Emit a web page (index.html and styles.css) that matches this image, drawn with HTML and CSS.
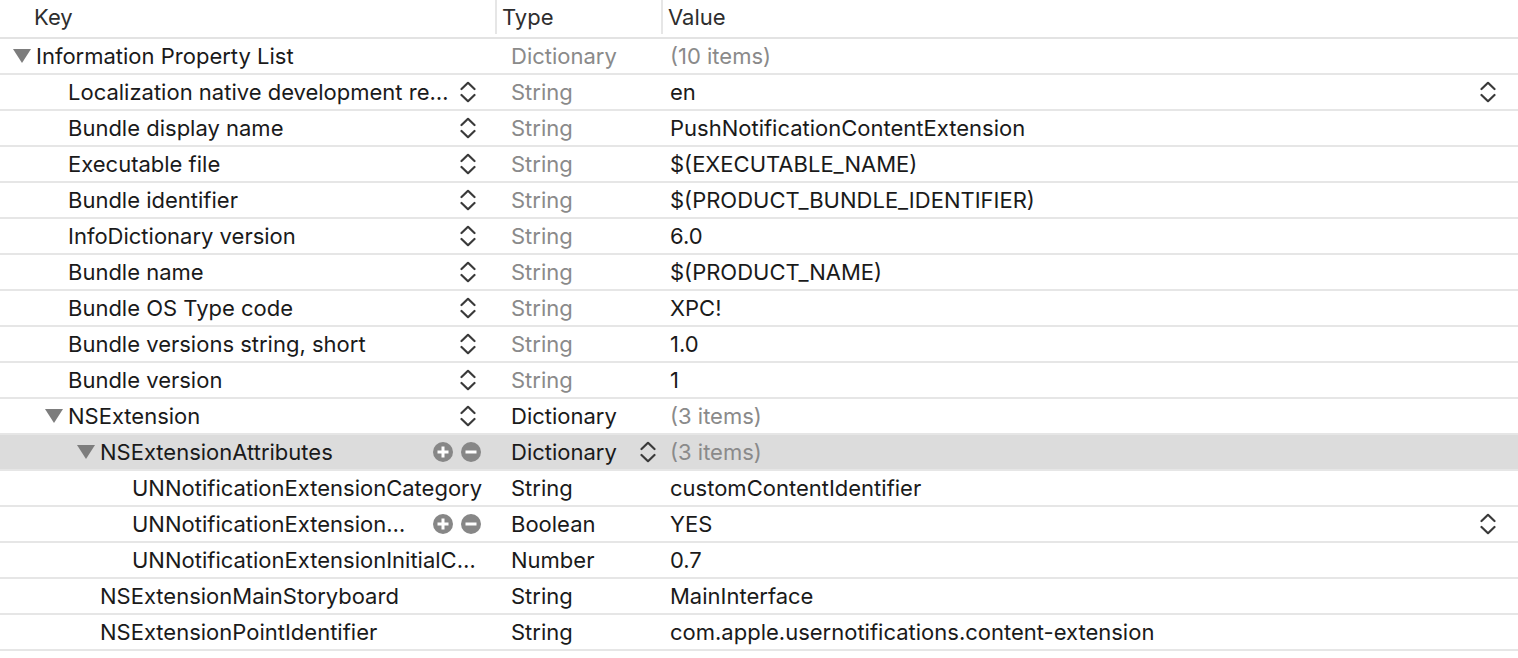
FILE: index.html
```html
<!DOCTYPE html>
<html>
<head>
<meta charset="utf-8">
<link rel="stylesheet" href="styles.css">
</head>
<body>
<svg width="0" height="0" class="defs">
  <defs>
    <symbol id="stepper" viewBox="0 0 16 22">
      <polyline points="1.5,8 8,1.8 14.5,8" fill="none" stroke="#3a3a3a" stroke-width="2.2" stroke-linecap="round" stroke-linejoin="round"/>
      <polyline points="1.5,14 8,20.2 14.5,14" fill="none" stroke="#3a3a3a" stroke-width="2.2" stroke-linecap="round" stroke-linejoin="round"/>
    </symbol>
    <symbol id="plus" viewBox="0 0 20 20">
      <circle cx="10" cy="10" r="10" fill="#878787"/>
      <rect x="4.5" y="8.5" width="11" height="3" fill="#fff"/>
      <rect x="8.5" y="4.5" width="3" height="11" fill="#fff"/>
    </symbol>
    <symbol id="minus" viewBox="0 0 20 20">
      <circle cx="10" cy="10" r="10" fill="#878787"/>
      <rect x="4.5" y="8.5" width="11" height="3" fill="#fff"/>
    </symbol>
    <symbol id="tri" viewBox="0 0 18 14">
      <polygon points="0,0 18,0 9,14" fill="#7d7d7d"/>
    </symbol>
  </defs>
</svg>
<div class="plist">
  <div class="header">
    <div class="hcell hkey">Key</div>
    <div class="hcell htype">Type</div>
    <div class="hcell hvalue">Value</div>
  </div>

  <div class="row">
    <div class="cell key lvl0"><svg class="tri"><use href="#tri"/></svg><span class="k">Information Property List</span></div>
    <div class="cell type dim">Dictionary</div>
    <div class="cell value dim">(10 items)</div>
  </div>

  <div class="row">
    <div class="cell key lvl1"><span class="notri"></span><span class="k">Localization native development re…</span><svg class="stepper kstep"><use href="#stepper"/></svg></div>
    <div class="cell type dim">String</div>
    <div class="cell value"><span class="v">en</span><svg class="stepper vstep"><use href="#stepper"/></svg></div>
  </div>

  <div class="row">
    <div class="cell key lvl1"><span class="notri"></span><span class="k">Bundle display name</span><svg class="stepper kstep"><use href="#stepper"/></svg></div>
    <div class="cell type dim">String</div>
    <div class="cell value">PushNotificationContentExtension</div>
  </div>

  <div class="row">
    <div class="cell key lvl1"><span class="notri"></span><span class="k">Executable file</span><svg class="stepper kstep"><use href="#stepper"/></svg></div>
    <div class="cell type dim">String</div>
    <div class="cell value">$(EXECUTABLE_NAME)</div>
  </div>

  <div class="row">
    <div class="cell key lvl1"><span class="notri"></span><span class="k">Bundle identifier</span><svg class="stepper kstep"><use href="#stepper"/></svg></div>
    <div class="cell type dim">String</div>
    <div class="cell value">$(PRODUCT_BUNDLE_IDENTIFIER)</div>
  </div>

  <div class="row">
    <div class="cell key lvl1"><span class="notri"></span><span class="k">InfoDictionary version</span><svg class="stepper kstep"><use href="#stepper"/></svg></div>
    <div class="cell type dim">String</div>
    <div class="cell value">6.0</div>
  </div>

  <div class="row">
    <div class="cell key lvl1"><span class="notri"></span><span class="k">Bundle name</span><svg class="stepper kstep"><use href="#stepper"/></svg></div>
    <div class="cell type dim">String</div>
    <div class="cell value">$(PRODUCT_NAME)</div>
  </div>

  <div class="row">
    <div class="cell key lvl1"><span class="notri"></span><span class="k">Bundle OS Type code</span><svg class="stepper kstep"><use href="#stepper"/></svg></div>
    <div class="cell type dim">String</div>
    <div class="cell value">XPC!</div>
  </div>

  <div class="row">
    <div class="cell key lvl1"><span class="notri"></span><span class="k">Bundle versions string, short</span><svg class="stepper kstep"><use href="#stepper"/></svg></div>
    <div class="cell type dim">String</div>
    <div class="cell value">1.0</div>
  </div>

  <div class="row">
    <div class="cell key lvl1"><span class="notri"></span><span class="k">Bundle version</span><svg class="stepper kstep"><use href="#stepper"/></svg></div>
    <div class="cell type dim">String</div>
    <div class="cell value">1</div>
  </div>

  <div class="row">
    <div class="cell key lvl1"><svg class="tri"><use href="#tri"/></svg><span class="k">NSExtension</span><svg class="stepper kstep"><use href="#stepper"/></svg></div>
    <div class="cell type">Dictionary</div>
    <div class="cell value dim">(3 items)</div>
  </div>

  <div class="row selected">
    <div class="cell key lvl2"><svg class="tri"><use href="#tri"/></svg><span class="k">NSExtensionAttributes</span><span class="pm"><svg class="btn"><use href="#plus"/></svg><svg class="btn"><use href="#minus"/></svg></span></div>
    <div class="cell type"><span class="v">Dictionary</span><svg class="stepper tstep"><use href="#stepper"/></svg></div>
    <div class="cell value dim">(3 items)</div>
  </div>

  <div class="row">
    <div class="cell key lvl3"><span class="notri"></span><span class="k">UNNotificationExtensionCategory</span></div>
    <div class="cell type">String</div>
    <div class="cell value">customContentIdentifier</div>
  </div>

  <div class="row">
    <div class="cell key lvl3"><span class="notri"></span><span class="k">UNNotificationExtension…</span><span class="pm"><svg class="btn"><use href="#plus"/></svg><svg class="btn"><use href="#minus"/></svg></span></div>
    <div class="cell type">Boolean</div>
    <div class="cell value"><span class="v">YES</span><svg class="stepper vstep"><use href="#stepper"/></svg></div>
  </div>

  <div class="row">
    <div class="cell key lvl3"><span class="notri"></span><span class="k">UNNotificationExtensionInitialC…</span></div>
    <div class="cell type">Number</div>
    <div class="cell value">0.7</div>
  </div>

  <div class="row">
    <div class="cell key lvl2"><span class="notri"></span><span class="k">NSExtensionMainStoryboard</span></div>
    <div class="cell type">String</div>
    <div class="cell value">MainInterface</div>
  </div>

  <div class="row">
    <div class="cell key lvl2"><span class="notri"></span><span class="k">NSExtensionPointIdentifier</span></div>
    <div class="cell type">String</div>
    <div class="cell value">com.apple.usernotifications.content-extension</div>
  </div>
</div>
</body>
</html>
```

FILE: styles.css
```css
html, body {
  margin: 0;
  padding: 0;
  background: #ffffff;
}

body {
  font-family: Inter, "Noto Sans", Roboto, sans-serif;
  font-size: 22px;
  color: #1a1a1a;
  width: 1518px;
  height: 658px;
  overflow: hidden;
}

.defs {
  position: absolute;
  width: 0;
  height: 0;
}

.plist {
  display: flex;
  flex-direction: column;
}

.header {
  display: flex;
  height: 37px;
  border-bottom: 2px solid #e3e3e3;
  color: #2e2e2e;
}

.hcell {
  height: 34px;
  display: flex;
  align-items: center;
  box-sizing: border-box;
}

.hkey {
  width: 497px;
  padding-left: 34px;
  border-right: 2px solid #e6e6e6;
}

.htype {
  width: 166px;
  padding-left: 5px;
  border-right: 2px solid #e6e6e6;
}

.hvalue {
  flex: 1;
  padding-left: 5px;
}

.row {
  display: flex;
  height: 34px;
  border-bottom: 2px solid #e6e6e6;
}

.row.selected {
  background: #dcdcdc;
}

.cell {
  display: flex;
  align-items: center;
  box-sizing: border-box;
  white-space: nowrap;
  overflow: hidden;
}

.key {
  width: 497px;
}

.type {
  width: 166px;
  padding-left: 14px;
}

.value {
  flex: 1;
  padding-left: 7px;
}

.dim {
  color: #8a8a8a;
}

.lvl0 { padding-left: 13px; }
.lvl1 { padding-left: 45px; }
.lvl2 { padding-left: 77px; }
.lvl3 { padding-left: 109px; }

.tri {
  width: 18px;
  height: 14px;
  margin-right: 5px;
  flex: none;
}

.notri {
  width: 23px;
  flex: none;
}

.k {
  flex: none;
}

.stepper {
  width: 16px;
  height: 22px;
  flex: none;
  margin-left: auto;
}

.kstep {
  margin-right: 21px;
}

.tstep {
  margin-right: 7px;
}

.vstep {
  margin-right: 22px;
}

.pm {
  margin-left: auto;
  margin-right: 16px;
  display: flex;
  gap: 8px;
}

.btn {
  width: 20px;
  height: 20px;
}
```
